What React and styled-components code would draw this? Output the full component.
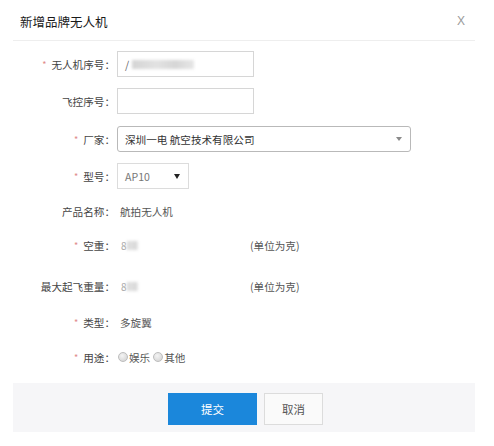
import React from 'react';
import styled, { createGlobalStyle } from 'styled-components';

const GlobalStyle = createGlobalStyle`
  html, body {
    margin: 0;
    padding: 0;
    background: #fff;
    font-family: "Noto Sans CJK SC", "Noto Sans", "Liberation Sans", sans-serif;
  }
`;

// Dialog shell
const Dialog = styled.div`
  width: 462px;
  margin-left: 13px;
  background: #fff;
`;

const Header = styled.div`
  display: flex;
  align-items: center;
  justify-content: space-between;
  height: 41px;
  padding: 0 7px;
  border-bottom: 1px solid #eeeeee;
  box-sizing: border-box;
`;

const Title = styled.div`
  font-size: 12.5px;
  font-weight: 400;
  color: #1a1a1a;
  padding-top: 2px;
`;

const Close = styled.span`
  font-family: "Liberation Sans", sans-serif;
  font-size: 12px;
  color: #9a9a9a;
  padding-top: 2px;
  padding-right: 3px;
  cursor: pointer;
`;

// Form rows
const Form = styled.div`
  display: flex;
  flex-direction: column;
`;

const Row = styled.div`
  display: flex;
  align-items: center;
  height: 26px;
  margin-top: ${(p) => p.$gap}px;
`;

const Label = styled.div`
  width: 102px;
  flex-shrink: 0;
  text-align: right;
  font-size: 10.6px;
  color: #444;
  margin-right: 2px;
  white-space: nowrap;
`;

const Star = styled.span`
  color: #e08a8a;
  font-size: 9px;
  margin-right: 5px;
  position: relative;
  top: -1px;
`;

const Input = styled.div`
  width: 137px;
  height: 26px;
  box-sizing: border-box;
  border: 1px solid #d6d6d6;
  display: flex;
  align-items: center;
  padding-left: 7px;
  font-size: 10.6px;
  color: #666;
`;

const Blur = styled.span`
  display: inline-block;
  width: ${(p) => p.$w}px;
  height: 9px;
  margin-left: ${(p) => p.$ml}px;
  background: linear-gradient(90deg, #d4d4d4, #e2e2e2 40%, #d6d6d6 70%, #e6e6e6);
  filter: blur(1.5px);
`;

const Select = styled.div`
  position: relative;
  width: ${(p) => p.$w}px;
  height: 26px;
  box-sizing: border-box;
  border: 1px solid ${(p) => (p.$rounded ? '#b9b9b9' : '#dcdcdc')};
  border-radius: ${(p) => (p.$rounded ? 3 : 0)}px;
  display: flex;
  align-items: center;
  justify-content: space-between;
  padding: 0 8px 0 7px;
  font-size: 10.6px;
  color: ${(p) => (p.$rounded ? '#333' : '#777')};
`;

const Arrow = styled.span`
  width: 0;
  height: 0;
  border-left: ${(p) => (p.$dark ? 3 : 3.5)}px solid transparent;
  border-right: ${(p) => (p.$dark ? 3 : 3.5)}px solid transparent;
  border-top: ${(p) => (p.$dark ? 5 : 4)}px solid ${(p) => (p.$dark ? '#222' : '#8a8a8a')};
`;

const Value = styled.div`
  display: flex;
  align-items: center;
  font-size: 10.6px;
  color: #555;
  padding-left: ${(p) => p.$pad || 3}px;
`;

const WeightBox = styled.div`
  width: 133px;
  display: flex;
  align-items: center;
  padding-left: 4px;
  box-sizing: border-box;
  font-size: 10px;
  color: #aaa;
`;

const Unit = styled.span`
  font-size: 10.6px;
  color: #555;
`;

const Radio = styled.span`
  display: inline-block;
  width: 10px;
  height: 10px;
  border-radius: 50%;
  border: 1px solid #bdbdbd;
  box-sizing: border-box;
  background: radial-gradient(circle at 40% 35%, #f4f4f4, #cfcfcf);
  margin-right: 1px;
`;

const Option = styled.label`
  display: inline-flex;
  align-items: center;
  margin-right: 3px;
`;

// Footer
const Footer = styled.div`
  display: flex;
  justify-content: center;
  gap: 7px;
  height: 49px;
  box-sizing: border-box;
  padding: 10px 0 0 3px;
  margin-top: 13px;
  background: #f6f6f8;
`;

const Button = styled.button`
  height: 32px;
  width: ${(p) => p.$w}px;
  font-family: inherit;
  font-size: 11.5px;
  cursor: pointer;
  border: 1px solid ${(p) => (p.$primary ? '#1b87db' : '#dcdcdc')};
  background: ${(p) => (p.$primary ? '#1b87db' : '#fafafa')};
  color: ${(p) => (p.$primary ? '#fff' : '#555')};
`;

export default function App() {
  return (
    <>
      <GlobalStyle />
      <Dialog>
        <Header>
          <Title>新增品牌无人机</Title>
          <Close>X</Close>
        </Header>
        <Form>
          <Row $gap={10}>
            <Label><Star>*</Star>无人机序号：</Label>
            <Input>/<Blur $w={62} $ml={3} /></Input>
          </Row>
          <Row $gap={11}>
            <Label>飞控序号：</Label>
            <Input />
          </Row>
          <Row $gap={12}>
            <Label><Star>*</Star>厂家：</Label>
            <Select $w={294} $rounded>
              深圳一电 航空技术有限公司
              <Arrow />
            </Select>
          </Row>
          <Row $gap={11}>
            <Label><Star>*</Star>型号：</Label>
            <Select $w={72}>
              AP10
              <Arrow $dark />
            </Select>
          </Row>
          <Row $gap={9}>
            <Label>产品名称：</Label>
            <Value>航拍无人机</Value>
          </Row>
          <Row $gap={8}>
            <Label><Star>*</Star>空重：</Label>
            <WeightBox>8<Blur $w={11} $ml={0} /></WeightBox>
            <Unit>(单位为克)</Unit>
          </Row>
          <Row $gap={15}>
            <Label>最大起飞重量：</Label>
            <WeightBox>8<Blur $w={11} $ml={0} /></WeightBox>
            <Unit>(单位为克)</Unit>
          </Row>
          <Row $gap={10}>
            <Label><Star>*</Star>类型：</Label>
            <Value>多旋翼</Value>
          </Row>
          <Row $gap={9}>
            <Label><Star>*</Star>用途：</Label>
            <Value $pad={1}>
              <Option><Radio />娱乐</Option>
              <Option><Radio />其他</Option>
            </Value>
          </Row>
        </Form>
        <Footer>
          <Button $primary $w={89}>提交</Button>
          <Button $w={59}>取消</Button>
        </Footer>
      </Dialog>
    </>
  );
}
